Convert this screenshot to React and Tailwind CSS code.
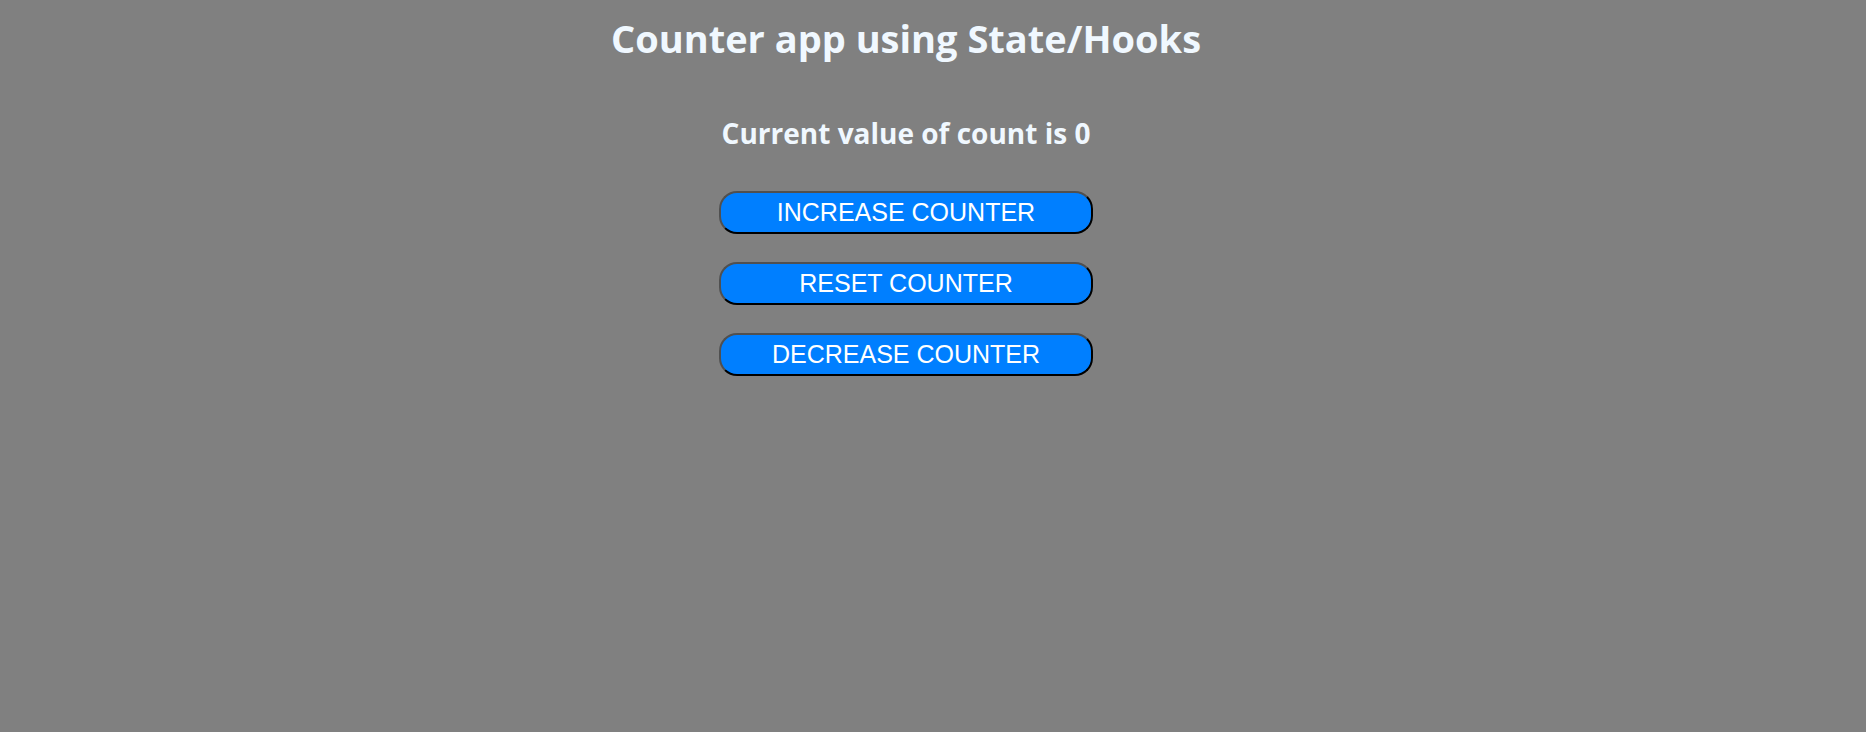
import React, { useState } from 'react';

const Counter = () => {
  const [count, setCount] = useState(0);

  const btn =
    "w-[374px] h-[43px] rounded-[18px] bg-[#007fff] text-white text-[25px] leading-none border-2 border-t-[#505050] border-l-[#505050] border-b-black border-r-black font-['Liberation_Sans',Arial,sans-serif]";

  return (
    <div className="min-h-[732px] bg-[#808080] pr-[54px] flex flex-col items-center font-['Open_Sans','Noto_Sans',sans-serif] text-[#f0f8ff]">
      <h1 className="mt-[14px] text-[38px] font-bold leading-[48px]">Counter app using State/Hooks</h1>
      <h3 className="mt-[53px] text-[28px] font-bold leading-[36px]">Current value of count is {count}</h3>
      <div className="mt-[40px] flex flex-col gap-[28px]">
        <button className={btn} onClick={() => setCount(c => c + 1)}>INCREASE COUNTER</button>
        <button className={btn} onClick={() => setCount(0)}>RESET COUNTER</button>
        <button className={btn} onClick={() => setCount(c => c - 1)}>DECREASE COUNTER</button>
      </div>
    </div>
  );
};

export default function App() {
  return <Counter />;
}
